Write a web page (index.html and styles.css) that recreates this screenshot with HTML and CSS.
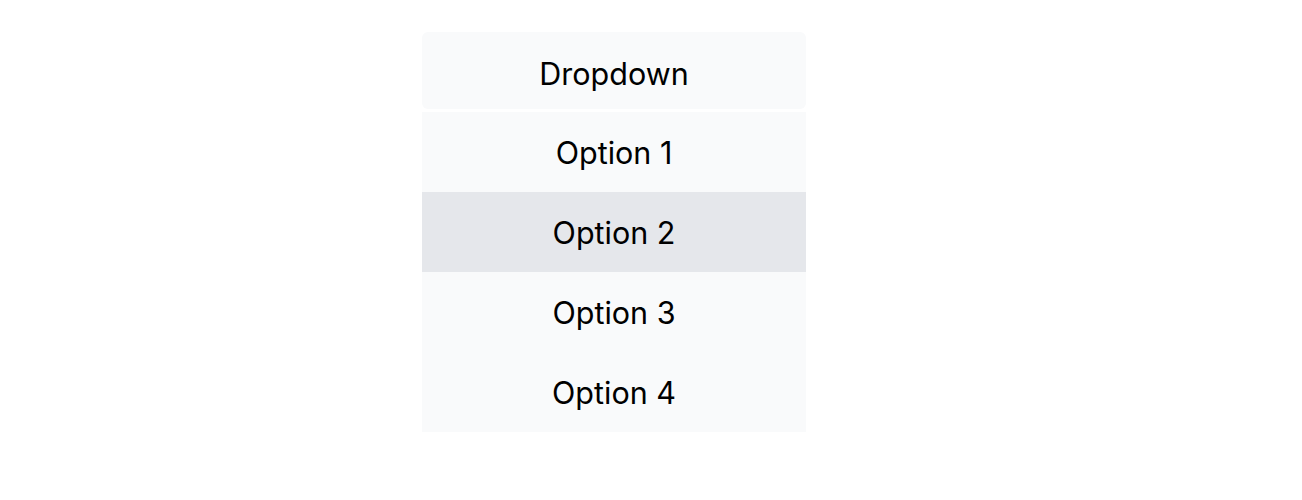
FILE: index.html
```html
<!DOCTYPE html>
<html>
<head>
<meta charset="utf-8">
<link rel="stylesheet" href="styles.css">
</head>
<body>
<div class="dropdown">
  <div class="dropdown-header">Dropdown</div>
  <ul class="dropdown-menu">
    <li class="dropdown-item">Option 1</li>
    <li class="dropdown-item active">Option 2</li>
    <li class="dropdown-item">Option 3</li>
    <li class="dropdown-item">Option 4</li>
  </ul>
</div>
</body>
</html>
```

FILE: styles.css
```css
html, body {
  margin: 0;
  padding: 0;
  background: #ffffff;
}
body {
  font-family: Inter, "Noto Sans", sans-serif;
  color: #000000;
  padding: 32px 0 0 422px;
}
.dropdown {
  width: 384px;
  display: flex;
  flex-direction: column;
  gap: 3px;
}
.dropdown-header {
  box-sizing: border-box;
  background: #f9fafb;
  border-radius: 6px;
  height: 77px;
  padding-top: 6px;
  display: flex;
  align-items: center;
  justify-content: center;
  font-size: 30.5px;
}
.dropdown-menu {
  list-style: none;
  margin: 0;
  padding: 0;
  background: #f9fafb;
}
.dropdown-item {
  box-sizing: border-box;
  height: 80px;
  padding-top: 1px;
  display: flex;
  align-items: center;
  justify-content: center;
  font-size: 30.5px;
}
.dropdown-item.active {
  background: #e5e7eb;
}
```
